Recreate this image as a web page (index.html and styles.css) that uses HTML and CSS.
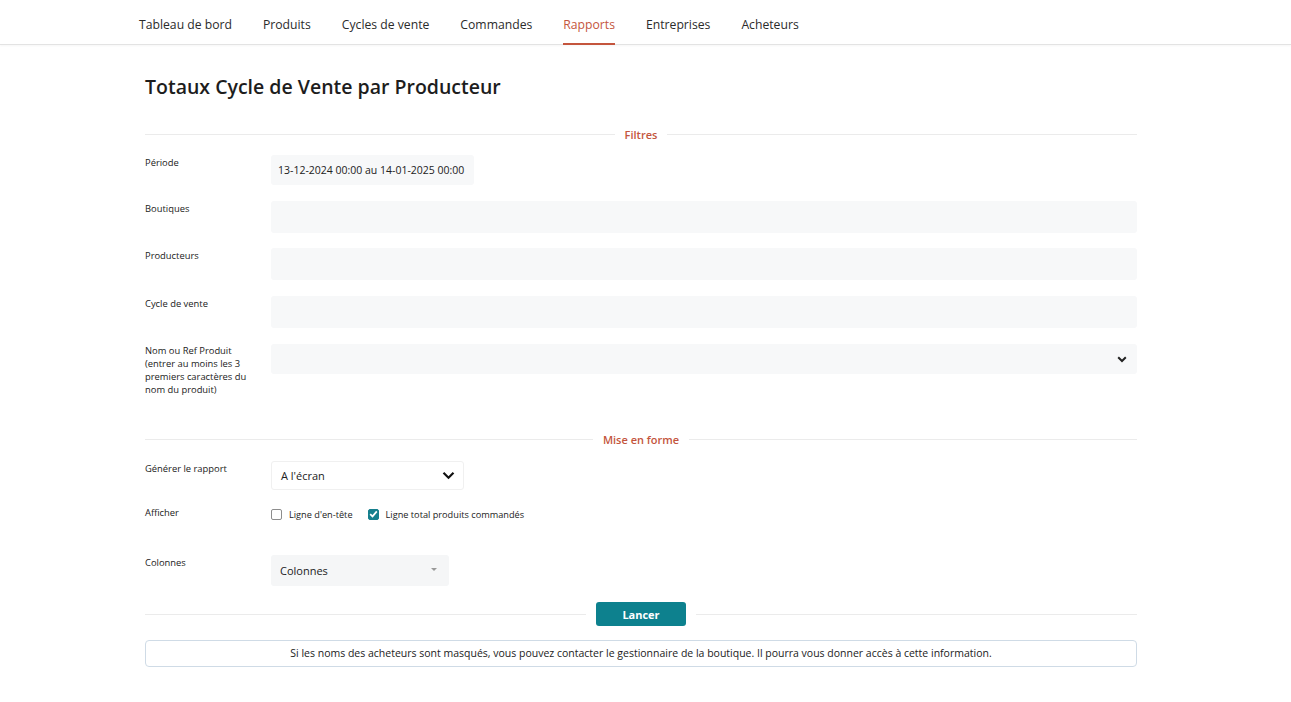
FILE: index.html
```html
<!DOCTYPE html>
<html lang="fr">
<head>
<meta charset="utf-8">
<title>Totaux Cycle de Vente par Producteur</title>
<link rel="stylesheet" href="styles.css">
</head>
<body>
<nav class="topnav">
  <a class="nav-item">Tableau de bord</a>
  <a class="nav-item">Produits</a>
  <a class="nav-item">Cycles de vente</a>
  <a class="nav-item">Commandes</a>
  <a class="nav-item active">Rapports</a>
  <a class="nav-item">Entreprises</a>
  <a class="nav-item">Acheteurs</a>
</nav>
<main class="page">
  <h1 class="title">Totaux Cycle de Vente par Producteur</h1>

  <div class="divider"><span class="divider-label">Filtres</span></div>

  <div class="row row-periode">
    <div class="label">Période</div>
    <div class="field field-date">13-12-2024 00:00 au 14-01-2025 00:00</div>
  </div>
  <div class="row">
    <div class="label">Boutiques</div>
    <div class="field field-wide"></div>
  </div>
  <div class="row">
    <div class="label">Producteurs</div>
    <div class="field field-wide"></div>
  </div>
  <div class="row">
    <div class="label">Cycle de vente</div>
    <div class="field field-wide"></div>
  </div>
  <div class="row row-produit">
    <div class="label">Nom ou Ref Produit (entrer au moins les 3 premiers caractères du nom du produit)</div>
    <div class="field field-wide field-select">
      <svg class="chev-small" width="10" height="7" viewBox="0 0 10 7"><path d="M1.2 1.3 L5 5 L8.8 1.3" fill="none" stroke="#222" stroke-width="2"/></svg>
    </div>
  </div>

  <div class="divider divider-mise"><span class="divider-label">Mise en forme</span></div>

  <div class="row row-gen">
    <div class="label">Générer le rapport</div>
    <div class="select-white">
      <span>A l'écran</span>
      <svg width="13" height="9" viewBox="0 0 13 9"><path d="M1.5 1.8 L6.5 6.8 L11.5 1.8" fill="none" stroke="#111" stroke-width="2.2"/></svg>
    </div>
  </div>
  <div class="row row-afficher">
    <div class="label">Afficher</div>
    <div class="checks">
      <label class="check"><span class="box"></span>Ligne d'en-tête</label>
      <label class="check"><span class="box checked"><svg width="9" height="8" viewBox="0 0 9 8"><path d="M1.2 4.2 L3.5 6.4 L7.8 1.4" fill="none" stroke="#fff" stroke-width="1.7"/></svg></span>Ligne total produits commandés</label>
    </div>
  </div>
  <div class="row row-colonnes">
    <div class="label">Colonnes</div>
    <div class="field field-cols">
      <span>Colonnes</span>
      <span class="caret"></span>
    </div>
  </div>

  <div class="divider divider-btn"><button class="btn">Lancer</button></div>

  <div class="info">Si les noms des acheteurs sont masqués, vous pouvez contacter le gestionnaire de la boutique. Il pourra vous donner accès à cette information.</div>
</main>
</body>
</html>
```
FILE: styles.css
```css
* { box-sizing: border-box; }
body {
  margin: 0;
  font-family: "Open Sans", "Noto Sans", sans-serif;
  color: #222;
  background: #fff;
}
.topnav {
  display: flex;
  align-items: flex-start;
  height: 45px;
  padding-left: 123.5px;
  border-bottom: 1px solid #e3e3e3;
  box-shadow: 0 1px 2px rgba(0,0,0,0.04);
}
.nav-item {
  position: relative;
  height: 44px;
  padding: 0 15.5px;
  font-size: 12.2px;
  font-weight: 500;
  line-height: 50px;
  color: #2b2b2b;
}
.nav-item.active { color: #c4553d; }
.nav-item.active::after {
  content: "";
  position: absolute;
  left: 15.5px;
  right: 15.5px;
  bottom: -1px;
  height: 2px;
  background: #c4553d;
}
.page {
  width: 992px;
  margin-left: 145px;
}
.title {
  margin: 28px 0 0;
  font-size: 19.5px;
  font-weight: 600;
  line-height: 28px;
  color: #1d1d1d;
}
.divider {
  display: flex;
  align-items: center;
  justify-content: center;
  margin-top: 23px;
  height: 20px;
}
.divider::before, .divider::after {
  content: "";
  flex: 1;
  height: 1px;
  background: #ebebeb;
}
.divider-label {
  padding: 0 10px;
  font-size: 11px;
  font-weight: 600;
  color: #c4553d;
}
.row {
  display: flex;
  margin-top: 15.5px;
}
.row-periode { margin-top: 11px; }
.row-produit { margin-top: 16.5px; }
.label {
  width: 126px;
  flex: none;
  padding-top: 1px;
  padding-right: 8px;
  font-size: 9.4px;
  font-weight: 500;
  line-height: 13px;
  color: #222;
}
.row-produit .label { padding-top: 0; }
.field {
  background: #f7f8f9;
  border-radius: 3px;
  height: 31px;
}
.field-date {
  width: 203px;
  height: 30px;
  padding-left: 7px;
  font-size: 10.5px;
  line-height: 30px;
  color: #222;
}
.field-wide { flex: 1; height: 32px; }
.row-produit .field { height: 30px; }
.field-select {
  display: flex;
  align-items: center;
  justify-content: flex-end;
  padding-right: 10px;
}
.divider-mise { margin-top: 33px; }
.row-gen { margin-top: 12px; }
.select-white {
  width: 193px;
  height: 29px;
  border: 1px solid #f0f0f0;
  border-radius: 3px;
  display: flex;
  align-items: center;
  justify-content: space-between;
  padding: 0 8px 0 9px;
  font-size: 11px;
}
.row-afficher { margin-top: 13px; }
.row-afficher .label { padding-top: 3px; }
.checks {
  display: flex;
  align-items: center;
  gap: 15px;
  height: 16px;
  padding-top: 6px;
}
.check {
  display: flex;
  align-items: center;
  font-size: 9.2px;
  font-weight: 500;
  color: #222;
}
.box {
  width: 11px;
  height: 11px;
  border: 1px solid #8d8d8d;
  border-radius: 2px;
  margin-right: 7px;
  display: flex;
  align-items: center;
  justify-content: center;
}
.box.checked {
  background: #157f8d;
  border-color: #157f8d;
}
.row-colonnes { margin-top: 36px; }
.field-cols {
  width: 178px;
  height: 31px;
  background: #f5f6f7;
  display: flex;
  align-items: center;
  justify-content: space-between;
  padding: 0 12px 0 9px;
  font-size: 11px;
}
.caret {
  width: 0;
  height: 0;
  border-left: 3px solid transparent;
  border-right: 3px solid transparent;
  border-top: 3px solid #999;
  margin-top: -2px;
}
.divider-btn {
  margin-top: 16px;
  height: 24px;
}
.btn {
  margin: 0 10px;
  width: 90px;
  height: 24px;
  border: none;
  border-radius: 3px;
  background: #0d818e;
  color: #fff;
  font-family: inherit;
  font-size: 11px;
  font-weight: 700;
}
.info {
  margin-top: 14px;
  height: 27px;
  border: 1px solid #cfdbe6;
  border-radius: 4px;
  text-align: center;
  font-size: 10.5px;
  line-height: 25px;
  color: #222;
}
```
